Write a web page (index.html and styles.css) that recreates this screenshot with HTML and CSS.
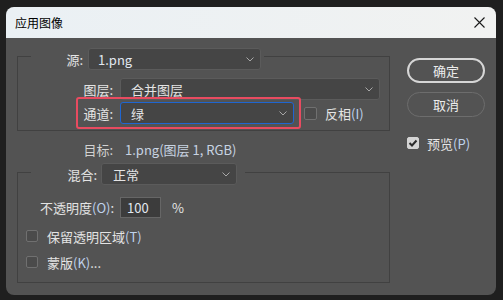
FILE: index.html
```html
<!DOCTYPE html>
<html lang="zh-CN">
<head>
  <meta charset="UTF-8">
  <title>应用图像</title>
  <link rel="stylesheet" href="styles.css">
</head>
<body>

<div class="window">
  <div class="titlebar">
    <span class="title">应用图像</span>
    <svg class="close" width="11" height="11" viewBox="0 0 11 11">
      <path d="M0.5 0.5 L10.5 10.5 M10.5 0.5 L0.5 10.5" stroke="#1a1a1a" stroke-width="1.1" fill="none"/>
    </svg>
  </div>

  <div class="content">
    <div class="left">
      <fieldset class="group group-source">
        <legend class="legend legend-source">
          <span class="lbl lbl-source">源:</span>
          <div class="dropdown dd-source">
            <span class="latin">1.png</span>
            <svg class="chev" width="8" height="5" viewBox="0 0 8 5"><path d="M0.5 0.5 L4 4 L7.5 0.5" stroke="#a8a8a8" fill="none"/></svg>
          </div>
        </legend>

        <div class="row">
          <span class="lbl lbl-row">图层:</span>
          <div class="dropdown dd-layer">
            <span>合并图层</span>
            <svg class="chev" width="8" height="5" viewBox="0 0 8 5"><path d="M0.5 0.5 L4 4 L7.5 0.5" stroke="#a8a8a8" fill="none"/></svg>
          </div>
        </div>

        <div class="row row-channel">
          <div class="highlight">
            <span class="lbl lbl-channel">通道:</span>
            <div class="dropdown dd-channel">
              <span>绿</span>
              <svg class="chev" width="8" height="5" viewBox="0 0 8 5"><path d="M0.5 0.5 L4 4 L7.5 0.5" stroke="#a8a8a8" fill="none"/></svg>
            </div>
          </div>
          <label class="check check-invert"><span class="box"></span>反相<span class="hk">(I)</span></label>
        </div>
      </fieldset>

      <div class="target">
        <span class="lbl lbl-target">目标:</span>
        <span class="target-value">1.png(图层 1, RGB)</span>
      </div>

      <fieldset class="group group-blend">
        <legend class="legend legend-blend">
          <span class="lbl lbl-blend">混合:</span>
          <div class="dropdown dd-blend">
            <span>正常</span>
            <svg class="chev" width="8" height="5" viewBox="0 0 8 5"><path d="M0.5 0.5 L4 4 L7.5 0.5" stroke="#a8a8a8" fill="none"/></svg>
          </div>
        </legend>

        <div class="opacity-row">
          <span class="lbl-opacity">不透明度<span class="hk">(O)</span>:</span>
          <div class="num-input latin">100</div>
          <span class="pct">%</span>
        </div>

        <label class="check check-row first"><span class="box"></span>保留透明区域<span class="hk">(T)</span></label>
        <label class="check check-row"><span class="box"></span>蒙版<span class="hk">(K)</span>...</label>
      </fieldset>
    </div>

    <div class="right">
      <button class="btn btn-primary">确定</button>
      <button class="btn">取消</button>
      <label class="check check-preview">
        <span class="box checked">
          <svg width="10" height="8" viewBox="0 0 10 8"><path d="M1.5 4 L4 6.5 L8.5 1.5" stroke="#2b2b2b" stroke-width="2" fill="none"/></svg>
        </span>预览<span class="hk">(P)</span>
      </label>
    </div>
  </div>
</div>

</body>
</html>
```

FILE: styles.css
```css
* {
  box-sizing: border-box;
}

body {
  margin: 0;
  background-color: #1f1f1f;
  font-family: "Noto Sans CJK SC", "Noto Sans", sans-serif;
  font-size: 13px;
  color: #e4e4e4;
}

.window {
  margin: 7px 0 0 6px;
  width: 490px;
  height: 288px;
  border-radius: 8px;
  overflow: hidden;
  background-color: #535353;
}

.titlebar {
  height: 31px;
  display: flex;
  align-items: center;
  justify-content: space-between;
  padding: 0 9px 0 9px;
  background: linear-gradient(90deg, #eaf0f4, #f1f2f1);
}

.title {
  font-size: 12px;
  color: #000;
}

.close {
  margin-right: 2px;
}

.content {
  display: flex;
  padding: 4px 0 0 11px;
}

.left {
  width: 373px;
}

/* group boxes */
.group {
  margin: 0;
  padding: 0;
  border: 1px solid #414141;
  min-width: 0;
}

.legend {
  display: flex;
  align-items: center;
  margin-left: 13px;
}

.legend-source {
  padding: 6px 3px 0 0;
}

.legend-blend {
  padding: 4px 8px 0 0;
}

.lbl {
  text-align: right;
  white-space: nowrap;
}

.lbl-source {
  width: 52px;
  margin-right: 5px;
}

.lbl-blend {
  width: 66px;
  margin-right: 4px;
}

.lbl-row {
  width: 95px;
  margin-right: 7px;
}

.lbl-channel {
  width: 35px;
  margin-right: 7px;
}

.dropdown {
  height: 22px;
  display: flex;
  align-items: center;
  justify-content: space-between;
  padding: 0 6px 0 9px;
  background-color: #454545;
  border: 1px solid #5b5b5b;
  border-radius: 3px;
}

.dd-source {
  width: 173px;
}

.dd-layer {
  width: 260px;
  padding-left: 10px;
}

.dd-channel {
  width: 174px;
  padding-left: 10px;
  border-color: #1f66d1;
}

.dd-blend {
  width: 136px;
  padding-left: 11px;
}

.row {
  display: flex;
  align-items: center;
  margin-top: 8px;
}

.group-source {
  padding-bottom: 1px;
}

.row-channel {
  margin-top: -3px;
}

.highlight {
  display: flex;
  align-items: center;
  margin-left: 58px;
  padding: 3px 5px 3px 0;
  border: 2px solid #e84b60;
  border-radius: 3px;
}

/* checkboxes */
.check {
  display: flex;
  align-items: center;
  white-space: nowrap;
}

.box {
  width: 12px;
  height: 12px;
  border: 1px solid #707070;
  border-radius: 2px;
  background-color: #4b4b4b;
  display: flex;
  align-items: center;
  justify-content: center;
}

.box.checked {
  background-color: #d4d4d4;
  border-color: #d4d4d4;
}

.check-invert {
  margin-left: 3px;
}

.check-invert .box {
  width: 13px;
  height: 13px;
  margin-right: 8px;
}

.hk {
  color: #bfd2ec;
}

.latin {
  color: #e2e8f0;
}

.target {
  display: flex;
  align-items: center;
  height: 18px;
  margin: 9px 0 1px 0;
}

.lbl-target {
  width: 96px;
  margin-right: 12px;
  color: #d2d2d2;
}

.target-value {
  color: #c8d3e2;
}

.group-blend {
  padding-bottom: 10px;
}

.opacity-row {
  display: flex;
  align-items: center;
  height: 21px;
  margin: 12px 0 0 22px;
}

.lbl-opacity {
  width: 80px;
  white-space: nowrap;
}

.num-input {
  width: 41px;
  height: 21px;
  padding-left: 6px;
  line-height: 19px;
  background-color: #3c3c3c;
  border: 1px solid #666;
}

.pct {
  margin-left: 11px;
}

.check-row {
  height: 20px;
  margin: 6px 0 0 8px;
}

.check-row.first {
  margin-top: 8px;
}

.check-row .box {
  margin-right: 9px;
}

/* right column */
.right {
  display: flex;
  flex-direction: column;
  margin: 16px 0 0 17px;
}

.btn {
  width: 78px;
  height: 25px;
  padding: 0;
  font-family: inherit;
  font-size: 13px;
  color: #ececec;
  background-color: #535353;
  border: 1px solid #6d6d6d;
  border-radius: 13px;
}

.btn-primary {
  border: 2px solid #d6d6d6;
}

.btn + .btn {
  margin-top: 9px;
}

.check-preview {
  height: 20px;
  margin-top: 16px;
}

.check-preview .box {
  margin-right: 8px;
}
```
